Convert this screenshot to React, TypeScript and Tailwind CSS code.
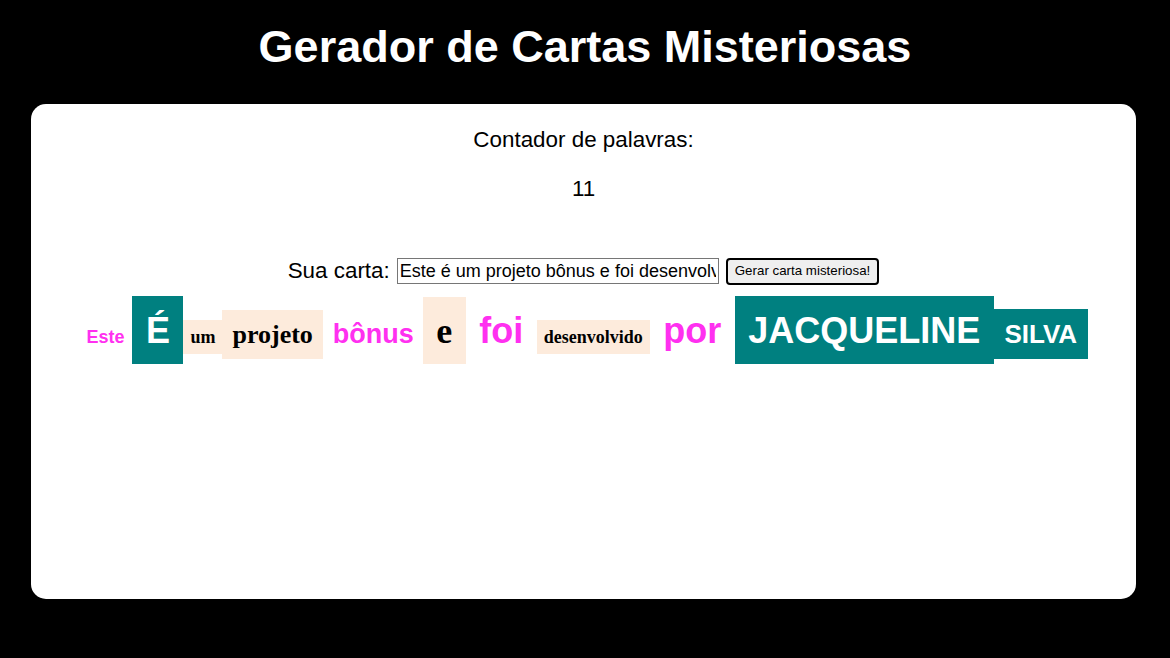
import React from "react";

type W = { t: string; c: string };

const words: W[] = [
  { t: "Este", c: "text-[18px] pl-[7px] pr-[8px] py-[7px] text-[#ff30f0] font-bold font-['Liberation_Sans',Arial,sans-serif]" },
  { t: "É", c: "text-[36px] p-[13.5px] bg-[#008080] text-white font-bold font-['Liberation_Sans',Arial,sans-serif]" },
  { t: "um", c: "text-[18px] p-[7px] bg-[#fdebdc] text-black font-bold font-['Liberation_Serif','Times_New_Roman',serif]" },
  { t: "projeto", c: "text-[26px] p-[10px] bg-[#fdebdc] text-black font-bold font-['Liberation_Serif','Times_New_Roman',serif]" },
  { t: "bônus", c: "text-[27px] pl-[10px] pr-[9px] py-[10px] text-[#ff30f0] font-bold font-['Liberation_Sans',Arial,sans-serif]" },
  { t: "e", c: "text-[36px] p-[13.5px] bg-[#fdebdc] text-black font-bold font-['Liberation_Serif','Times_New_Roman',serif]" },
  { t: "foi", c: "text-[36px] p-[13.5px] text-[#ff30f0] font-bold font-['Liberation_Sans',Arial,sans-serif]" },
  { t: "desenvolvido", c: "text-[18px] p-[7px] bg-[#fdebdc] text-black font-bold font-['Liberation_Serif','Times_New_Roman',serif]" },
  { t: "por", c: "text-[36px] p-[13.5px] text-[#ff30f0] font-bold font-['Liberation_Sans',Arial,sans-serif]" },
  { t: "JACQUELINE", c: "text-[36px] p-[13.5px] bg-[#008080] text-white font-bold font-['Liberation_Sans',Arial,sans-serif]" },
  { t: "SILVA", c: "text-[26px] px-[10.5px] py-[10px] bg-[#008080] text-white font-bold font-['Liberation_Sans',Arial,sans-serif]" },
];

export default function App() {
  return (
    <div className="min-h-[658px] w-full bg-black pt-[21px] pb-[59px] font-['Liberation_Sans',Arial,sans-serif]">
      <h1 className="text-center text-[45px] font-bold leading-[normal] text-white">
        Gerador de Cartas Misteriosas
      </h1>
      <div className="ml-[31px] mt-[31px] h-[495px] w-[1105px] rounded-[15px] bg-white pt-[23px] text-black">
        <p className="text-center text-[22.4px] leading-[normal]">Contador de palavras:</p>
        <p className="mt-[22.5px] text-center text-[22.4px] leading-[normal]">11</p>
        <div className="mt-[56px] flex items-center justify-center">
          <span className="text-[22.4px] leading-[normal]">Sua carta:</span>
          <input
            readOnly
            value="Este é um projeto bônus e foi desenvolvido por JACQUELINE SILVA"
            className="ml-[7px] h-[26px] w-[322px] border border-[#767676] bg-white px-[2px] text-[18px] text-black outline-none"
          />
          <button className="ml-[7px] h-[27px] rounded-[4px] border-2 border-black bg-[#efefef] px-[7px] text-[13.33px] text-black">
            Gerar carta misteriosa!
          </button>
        </div>
        <p className="mt-[25px] text-center leading-[normal]">
          {words.map((w, i) => (
            <span key={i} className={w.c}>
              {w.t}
            </span>
          ))}
        </p>
      </div>
    </div>
  );
}
